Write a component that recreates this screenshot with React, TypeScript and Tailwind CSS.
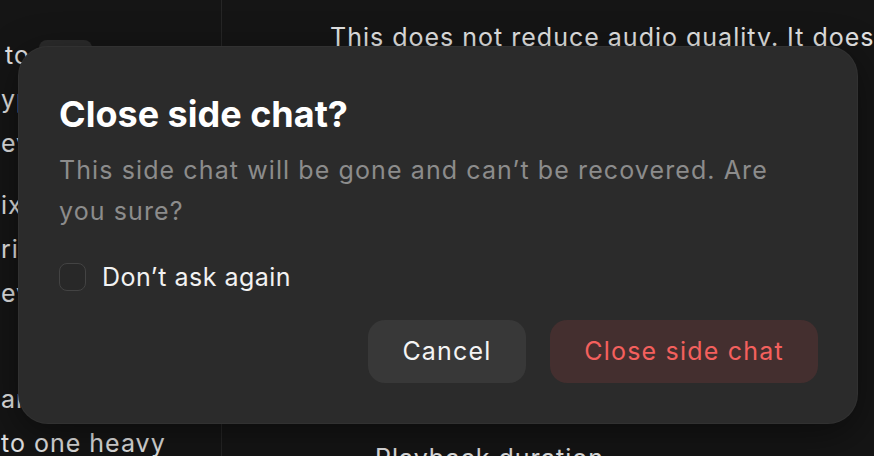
import { useState } from "react";

const sidebarGroups = [
  { className: "mt-[33px]", lines: ["to", "ype", "eview"] },
  { className: "mt-[18px]", lines: ["ix it", "rity", "every"] },
  { className: "mt-[62px]", lines: ["ar.", "to one heavy"] },
];

const Sidebar = () => {
  return (
    <aside className="w-[222px] shrink-0 overflow-hidden border-r border-[#262626] text-[25px] leading-[44px] tracking-[1px] text-[#e4e4e4] whitespace-nowrap">
      {sidebarGroups.map((group, gi) => (
        <div key={gi} className={group.className}>
          {group.lines.map((line, li) => (
            <div key={li} className={gi === 0 && li === 0 ? "pl-[5px] flex items-center" : "pl-[1px]"}>
              {line}
              {gi === 0 && li === 0 && (
                <span className="ml-[9px] inline-block w-[53px] h-[30px] rounded-lg bg-[#2c2c2c]" />
              )}
            </div>
          ))}
        </div>
      ))}
    </aside>
  );
};

const Content = () => {
  return (
    <main className="flex-1 overflow-hidden whitespace-nowrap text-[25px] leading-[41px] tracking-[1px] text-[#e4e4e4]">
      <p className="mt-[17px] pl-[108px]">This does not reduce audio quality. It does not change the file.</p>
      <p className="mt-[380px] pl-[153px]">Playback duration</p>
    </main>
  );
};

const ConfirmDialog = () => {
  const [dontAsk, setDontAsk] = useState<boolean>(false);

  return (
    <div className="absolute left-[18px] top-[46px] w-[840px] h-[378px] rounded-[30px] bg-[#2b2b2b] border border-white/[0.03] shadow-[0_10px_40px_rgba(0,0,0,0.45)] pt-[45px] pl-[40px] pr-[39px] pb-[40px] flex flex-col">
      <h2 className="text-[36px] leading-[44px] font-bold tracking-[0px] text-white">
        Close side chat?
      </h2>
      <p className="mt-[14px] text-[25px] leading-[41px] tracking-[1.1px] text-[#8c8c8c]">
        This side chat will be gone and can’t be recovered. Are
        <br />
        you sure?
      </p>
      <label className="mt-[31px] flex items-center h-[28px] cursor-pointer">
        <button
          type="button"
          onClick={() => setDontAsk(!dontAsk)}
          className="w-[27px] h-[28px] rounded-[8px] border-[1.5px] border-[#434343] bg-[#282828]"
        />
        <span className="ml-[16px] text-[25px] leading-[28px] tracking-[0.5px] text-[#f2f2f2]">Don’t ask again</span>
      </label>
      <div className="mt-[29px] flex justify-end gap-[24px]">
        <button className="h-[63px] w-[158px] rounded-[17px] bg-[#383838] text-[25px] tracking-[1.2px] text-[#f4f4f4]">
          Cancel
        </button>
        <button className="h-[63px] w-[268px] rounded-[17px] bg-[#442f2f] text-[25px] tracking-[1.2px] text-[#f4605d]">
          Close side chat
        </button>
      </div>
    </div>
  );
};

export default function App() {
  return (
    <div className="relative w-[874px] h-[456px] overflow-hidden bg-[#151515] flex font-['Inter',sans-serif]">
      <Sidebar />
      <Content />
      <ConfirmDialog />
    </div>
  );
}
